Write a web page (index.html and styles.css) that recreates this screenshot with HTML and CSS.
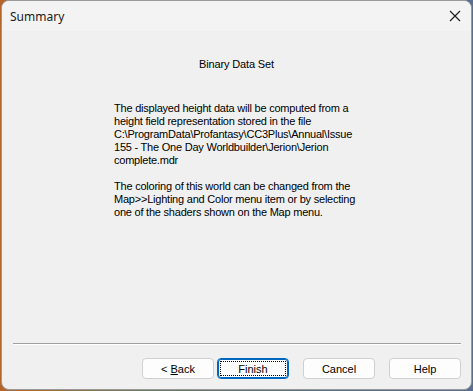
FILE: index.html
```html
<!DOCTYPE html>
<html>
<head>
    <title>Summary</title>
    <link rel="stylesheet" href="styles.css">
</head>
<body>
    <div class="window">
        <div class="titlebar">
            <span class="title">Summary</span>
            <svg class="close" width="12" height="12" viewBox="0 0 12 12">
                <path d="M1 1 L11 11 M11 1 L1 11" stroke="#1a1a1a" stroke-width="1.1" fill="none"/>
            </svg>
        </div>
        <div class="content">
            <div class="heading">Binary Data Set</div>
            <div class="text">
                <div class="line">The displayed height data will be computed from a</div>
                <div class="line">height field representation stored in the file</div>
                <div class="line">C:\ProgramData\Profantasy\CC3Plus\Annual\Issue</div>
                <div class="line">155 - The One Day Worldbuilder\Jerion\Jerion</div>
                <div class="line">complete.mdr</div>
                <div class="line">&nbsp;</div>
                <div class="line">The coloring of this world can be changed from the</div>
                <div class="line">Map&gt;&gt;Lighting and Color menu item or by selecting</div>
                <div class="line">one of the shaders shown on the Map menu.</div>
            </div>
        </div>
        <div class="separator"></div>
        <div class="buttons">
            <button class="btn">&lt; <u>B</u>ack</button>
            <button class="btn default"><span class="focus">Finish</span></button>
            <button class="btn gap">Cancel</button>
            <button class="btn gap">Help</button>
        </div>
    </div>
</body>
</html>
```

FILE: styles.css
```css
body {
    margin: 0;
    padding: 0;
    background: linear-gradient(90deg, #b5652a 0%, #6a7a5a 30%, #4f6f8a 70%, #5a6f90 100%);
    height: 391px;
    overflow: hidden;
}
.window {
    margin: 0 1px;
    width: 469px;
    height: 388px;
    background-color: #f0f0f0;
    border: 1px solid #9a9a9a;
    border-radius: 8px;
    display: flex;
    flex-direction: column;
    overflow: hidden;
    font-family: "Liberation Sans", Arial, sans-serif;
    font-size: 11px;
    color: #000;
}
.titlebar {
    height: 30px;
    background-color: #f3f3f3;
    display: flex;
    align-items: center;
    justify-content: space-between;
    padding: 0 10px 0 8px;
    flex-shrink: 0;
}
.title {
    font-family: "Noto Sans", sans-serif;
    font-size: 12px;
    color: #1a1a1a;
}
.close {
    margin-top: -1px;
}
.content {
    flex: 1;
    padding-top: 27px;
}
.heading {
    text-align: center;
    line-height: 13px;
    letter-spacing: -0.15px;
}
.text {
    margin: 31px 0 0 112px;
    width: 243px;
    line-height: 13px;
    letter-spacing: -0.22px;
}
.line {
    white-space: nowrap;
    overflow: hidden;
}
.separator {
    margin: 0 10px 0 11px;
    height: 1px;
    background-color: #a0a0a0;
    border-bottom: 1px solid #fff;
}
.buttons {
    display: flex;
    justify-content: flex-end;
    gap: 3px;
    padding: 13px 10px 10px 0;
}
.btn {
    width: 72px;
    height: 21px;
    background-color: #fdfdfd;
    border: 1px solid #d0d0d0;
    border-radius: 4px;
    font-family: "Liberation Sans", Arial, sans-serif;
    font-size: 11px;
    color: #000;
    padding: 0;
}
.btn.gap {
    margin-left: 11px;
}
.btn.default {
    border: 1px solid #0067c0;
    box-shadow: inset 0 0 0 1px #0067c0;
    padding: 2px;
}
.focus {
    display: flex;
    align-items: center;
    justify-content: center;
    height: 100%;
    border: 1px dotted #000;
    box-sizing: border-box;
}
```
